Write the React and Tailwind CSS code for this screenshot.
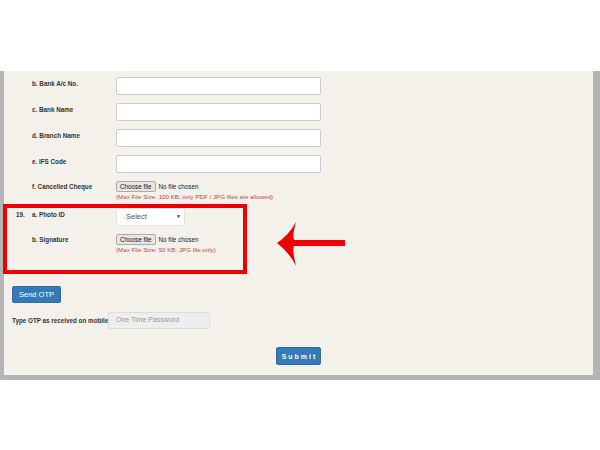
import React from 'react';

const font = { fontFamily: '"Liberation Sans", Arial, sans-serif' };

const TextRow = ({ label }) => (
    <div className="flex h-[26px]">
        <div className="w-[84px] pt-[2px] text-[6.3px] leading-[9px] font-bold text-[#333]">{label}</div>
        <div className="w-[205px] h-[18px] bg-white border border-[#ccc] rounded-[2px]" />
    </div>
);

const FileRow = ({ num, label, note, h }) => (
    <div className={`flex ${h}`}>
        <div className="w-[16px] pt-[1px] text-[6.3px] leading-[9px] font-bold text-[#333]">{num}</div>
        <div className="w-[84px] pt-[1px] text-[6.3px] leading-[9px] font-bold text-[#333]">{label}</div>
        <div>
            <div className="flex items-center gap-[3px]">
                <span className="h-[11px] px-[3px] flex items-center bg-[#e6e6e6] border border-[#aaa] rounded-[2px] text-[6.3px] text-[#111]">Choose file</span>
                <span className="text-[6.3px] text-[#222]">No file chosen</span>
            </div>
            <div className="mt-[1px] text-[6.2px] text-[#b94a48] leading-[8px]">{note}</div>
        </div>
    </div>
);

const App = () => {
    return (
        <div className="w-[600px] h-[450px] bg-white overflow-hidden" style={font}>
            <div className="h-[71px]" />
            <div className="bg-[#b5b5b5] pl-[4px] pr-[7px] pb-[5px]">
                <div className="relative h-[304px] bg-[#f4f1eb] pt-[6px]">
                    <div className="pl-[12px]">
                        <div className="pl-[16px]">
                            <TextRow label="b. Bank A/c No." />
                            <TextRow label="c. Bank Name" />
                            <TextRow label="d. Branch Name" />
                            <TextRow label="e. IFS Code" />
                        </div>
                        <FileRow num="" label="f. Cancelled Cheque" note="(Max File Size: 100 KB; only PDF / JPG files are allowed)" h="h-[27px]" />
                        <div className="flex h-[26px]">
                            <div className="w-[16px] pt-[2px] text-[6.3px] leading-[9px] font-bold text-[#333]">19.</div>
                            <div className="w-[84px] pt-[2px] text-[6.3px] leading-[9px] font-bold text-[#333]">a. Photo ID</div>
                            <div className="w-[69px] h-[18px] bg-white border border-[#e2e2e2] rounded-[2px] flex items-center justify-between pl-[9px] pr-[3px] text-[7.5px] text-[#555]">
                                <span>Select</span>
                                <span className="text-[5px] text-[#333]">▼</span>
                            </div>
                        </div>
                        <FileRow num="" label="b. Signature" note="(Max File Size: 50 KB; JPG file only)" h="h-[52px]" />
                    </div>
                    <div className="pl-[8px]">
                        <div className="flex">
                            <button className="h-[17px] px-[6px] bg-[#337ab7] text-white text-[7.5px] leading-none rounded-[2px] border border-[#2e6da4]">Send OTP</button>
                        </div>
                        <div className="flex items-center mt-[9px]">
                            <span className="text-[6.3px] font-bold text-[#333] whitespace-nowrap w-[96px]">Type OTP as received on mobile</span>
                            <div className="w-[102px] h-[17px] bg-[#eeeeee] border border-[#ddd] rounded-[2px] flex items-center pl-[7px] text-[7px] text-[#999]">One Time Password</div>
                        </div>
                    </div>
                    <div className="flex justify-center mt-[18px]">
                        <button className="h-[18px] w-[45px] bg-[#337ab7] text-white text-[7px] leading-none font-bold tracking-[2px] pl-[2px] rounded-[2px] border border-[#2e6da4]">Submit</button>
                    </div>

                    <div className="absolute left-[-1px] top-[133px] w-[244px] h-[70px] border-[4px] border-[#ee0000]" />
                    <svg className="absolute left-[269px] top-[151px]" width="76" height="45" viewBox="0 0 76 45">
                        <path d="M4 21 Q16 13 23 0 Q19 14 21 18 L72 18 L72 24 L21 24 Q19 28 23 44 Q16 30 4 21 Z" fill="#ee0000" />
                    </svg>
                </div>
            </div>
        </div>
    );
};

export default App;
